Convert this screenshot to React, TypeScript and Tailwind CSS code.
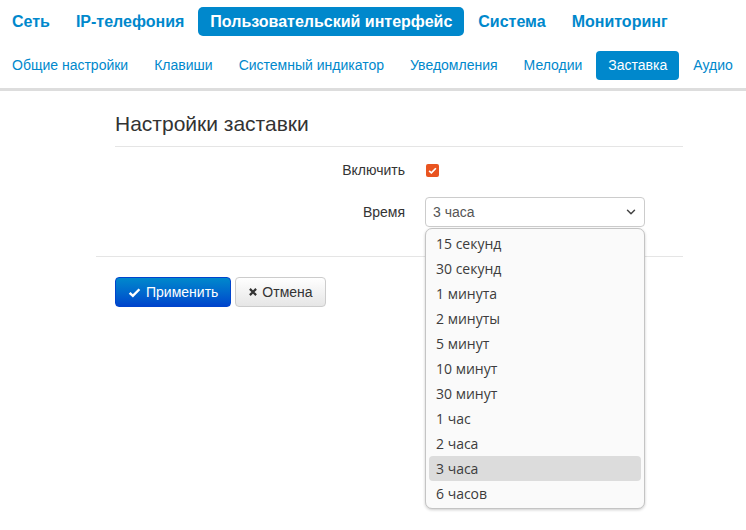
import { ChevronDown } from 'lucide-react';

const TOP_ITEMS = ['Сеть', 'IP-телефония', 'Пользовательский интерфейс', 'Система', 'Мониторинг'];
const SUB_ITEMS = ['Общие настройки', 'Клавиши', 'Системный индикатор', 'Уведомления', 'Мелодии', 'Заставка', 'Аудио'];
const TIMES = [
  '15 секунд',
  '30 секунд',
  '1 минута',
  '2 минуты',
  '5 минут',
  '10 минут',
  '30 минут',
  '1 час',
  '2 часа',
  '3 часа',
  '6 часов',
];

function CheckIcon({ className }: { className?: string }) {
  return (
    <svg viewBox="0 0 16 16" className={className} aria-hidden>
      <path d="M2 8.5 L6 12.2 L14 4" fill="none" stroke="currentColor" strokeWidth="3" />
    </svg>
  );
}

function CrossIcon({ className }: { className?: string }) {
  return (
    <svg viewBox="0 0 16 16" className={className} aria-hidden>
      <path d="M3 3 L13 13 M13 3 L3 13" fill="none" stroke="currentColor" strokeWidth="3.4" />
    </svg>
  );
}

export default function App() {
  const active = 'Пользовательский интерфейс';
  const activeSub = 'Заставка';
  const selected = '3 часа';

  return (
    <div className="relative h-[530px] w-[746px] overflow-hidden bg-white font-['Liberation_Sans',Arial,sans-serif] text-[#333]">
      <nav className="flex pt-[7px]">
        {TOP_ITEMS.map((item) => (
          <span
            key={item}
            className={`mr-[2px] flex h-[29px] items-center rounded-[5px] px-[12px] text-[16px] font-bold ${
              item === active ? 'bg-[#0088cc] text-white' : 'text-[#0088cc]'
            }`}
          >
            {item}
          </span>
        ))}
      </nav>
      <nav className="mt-[15px] flex border-b-[3px] border-[#dddddd] pb-[8px]">
        {SUB_ITEMS.map((item) => (
          <span
            key={item}
            className={`mr-[2px] flex h-[29px] items-center whitespace-nowrap rounded-[4px] px-[12px] text-[14px] ${
              item === activeSub ? 'bg-[#0088cc] text-white' : 'text-[#0088cc]'
            }`}
          >
            {item}
          </span>
        ))}
      </nav>

      <div className="ml-[96px] w-[587px]">
        <div className="ml-[19px] mt-[19px] border-b border-[#e5e5e5] pb-[8px] text-[21px] leading-[28px]">
          Настройки заставки
        </div>

        <div className="mt-[13px] flex items-center">
          <div className="w-[309px] text-right text-[14px]">Включить</div>
          <div className="ml-[21px] flex h-[13px] w-[13px] items-center justify-center rounded-[2px] bg-[#e95420]">
            <CheckIcon className="h-[9px] w-[9px] text-white" />
          </div>
        </div>

        <div className="mt-[16px] flex items-center border-b border-[#e5e5e5] pb-[29px]">
          <div className="w-[309px] text-right text-[14px]">Время</div>
          <div className="ml-[20px] flex h-[30px] w-[220px] items-center justify-between rounded-[4px] border border-[#cccccc] bg-white pl-[7px] pr-[6px] text-[14px] text-[#555]">
            <span>{selected}</span>
            <ChevronDown className="h-[14px] w-[14px] text-[#444]" strokeWidth={2.5} />
          </div>
        </div>

        <div className="ml-[19px] mt-[20px] flex gap-[4px]">
          <button
            type="button"
            className="flex h-[30px] items-center gap-[5px] rounded-[4px] border border-[#0044cc] bg-gradient-to-b from-[#0088cc] to-[#0044cc] px-[12px] text-[14px] text-white"
          >
            <CheckIcon className="h-[13px] w-[13px]" />
            Применить
          </button>
          <button
            type="button"
            className="flex h-[30px] items-center gap-[4px] rounded-[4px] border border-[#cccccc] bg-gradient-to-b from-white to-[#e6e6e6] px-[12px] text-[14px] text-[#333]"
          >
            <CrossIcon className="h-[10px] w-[10px]" />
            Отмена
          </button>
        </div>
      </div>

      <ul className="absolute left-[425px] top-[228px] w-[220px] rounded-[7px] border border-[#c4c4c4] bg-[#fafafa] px-[3px] py-[2px] font-['Open_Sans',sans-serif] text-[14px] text-[#3c3c3c] shadow-[0_1px_3px_rgba(0,0,0,0.2)]">
        {TIMES.map((t) => (
          <li
            key={t}
            className={`flex h-[25px] items-center rounded-[4px] px-[7px] ${t === selected ? 'bg-[#dcdcdc]' : ''}`}
          >
            {t}
          </li>
        ))}
      </ul>
    </div>
  );
}
